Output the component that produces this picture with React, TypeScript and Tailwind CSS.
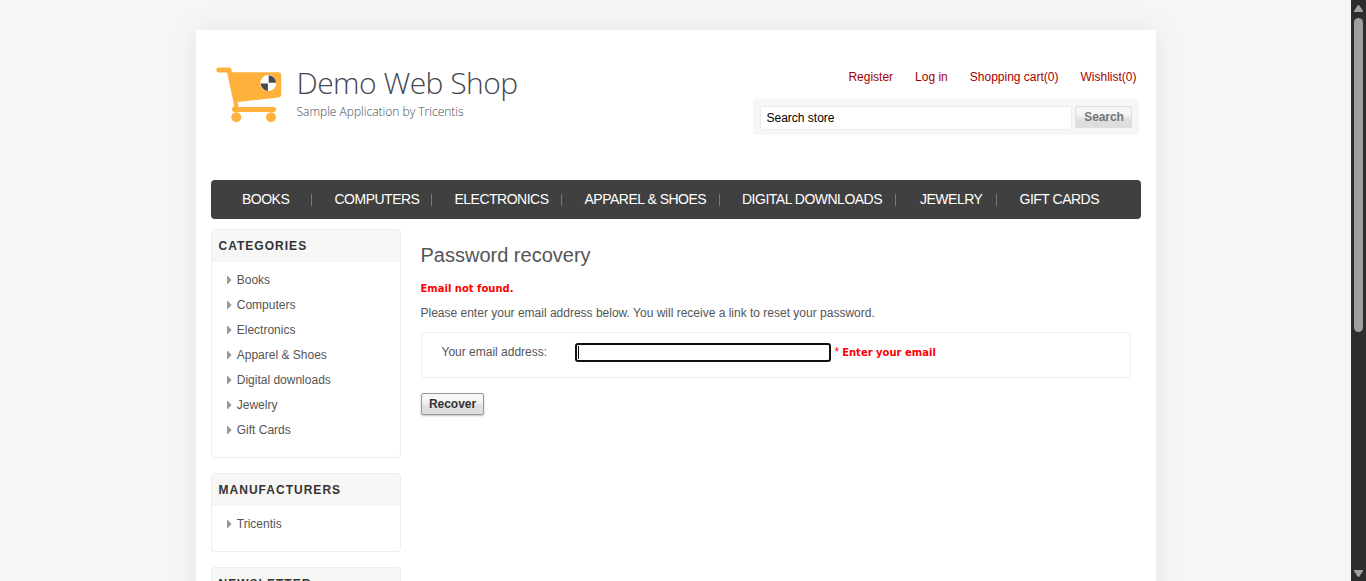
import React from "react";

const menu = [
  { label: "Books", cls: "w-[101px] pl-[31px]" },
  { label: "Computers", cls: "w-[120px] pl-[22.5px]" },
  { label: "Electronics", cls: "w-[130px] pl-[22.5px]" },
  { label: "Apparel & Shoes", cls: "w-[158px] pl-[22.5px]" },
  { label: "Digital downloads", cls: "w-[176px] pl-[22px]" },
  { label: "Jewelry", cls: "w-[101px] pl-[24px]" },
  { label: "Gift Cards", cls: "w-[140px] pl-[22.5px]" },
];

const categories = ["Books", "Computers", "Electronics", "Apparel & Shoes", "Digital downloads", "Jewelry", "Gift Cards"];

function CartLogo() {
  return (
    <svg width="66" height="58" viewBox="0 0 66 58" fill="none">
      <path
        d="M2.7 2.6H13.2Q15.2 2.6 15.5 4.6L16 7.3H62.2Q65.2 7.3 65.2 10.3V29.6Q65.2 32 62.8 32.4L21.7 37V38.6Q23 40 22 42H57.6A2.5 2.5 0 0 1 57.6 47H18.4Q15.8 46.8 16 44.4Q16.2 42 18.2 40.8L11 7.4H2.7A2.4 2.4 0 0 1 2.7 2.6Z"
        fill="#ffb23b"
      />
      <circle cx="20.3" cy="52.2" r="5" fill="#ffb23b" />
      <circle cx="55" cy="52.2" r="5" fill="#ffb23b" />
      <circle cx="52.3" cy="18.1" r="8" fill="#fff" />
      <path d="M52.7 17.7V10.3A7.7 7.7 0 0 1 60 17.7ZM51.9 18.5V25.9A7.7 7.7 0 0 1 44.6 18.5Z" fill="#454852" />
    </svg>
  );
}

function Block({ title, items, className }: { title: string; items: string[]; className: string }) {
  return (
    <section className={`overflow-hidden rounded-[4px] border border-[#ededed] ${className}`}>
      <h2 className="h-8 bg-[#f6f6f5] pt-px pl-[6.5px] text-[12px] leading-[31px] font-bold tracking-[1.02px] text-[#333] uppercase">{title}</h2>
      <ul className="pt-[5px]">
        {items.map((item) => (
          <li key={item} className="flex h-[25px] items-center pl-[15px] text-[12px] leading-[25px] text-[#555]">
            <svg width="5" height="8" viewBox="0 0 5 8" className="mr-[4.75px] shrink-0">
              <path d="M0 0H.8L4.6 4L.8 8H0Z" fill="#999" />
            </svg>
            <span className="pt-[2px]">{item}</span>
          </li>
        ))}
      </ul>
    </section>
  );
}

function Scrollbar() {
  return (
    <div className="flex h-full w-[15px] shrink-0 flex-col items-center bg-[#2c2c2c]">
      <svg width="9" height="7" viewBox="0 0 9 7" className="mt-[5px] shrink-0">
        <path d="M4.5 0Q5.2 0 5.6 .8L9 6V7H0V6L3.4 .8Q3.8 0 4.5 0Z" fill="#9f9f9f" />
      </svg>
      <div className="mt-[6px] h-[314px] w-[9px] shrink-0 rounded-full bg-[#9f9f9f]" />
      <svg width="9" height="7" viewBox="0 0 9 7" className="mt-auto mb-[4px] shrink-0">
        <path d="M4.5 7Q5.2 7 5.6 6.2L9 1V0H0V1L3.4 6.2Q3.8 7 4.5 7Z" fill="#9f9f9f" />
      </svg>
    </div>
  );
}

export default function App() {
  return (
    <div className="flex h-[581px] w-[1366px] overflow-hidden bg-[#f6f6f4] font-['Liberation_Sans',Arial,sans-serif] text-[12px]">
      <div className="h-full flex-1 overflow-hidden pt-[30px] pl-[196px]">
        <div className="h-[800px] w-[960px] bg-white px-[15px] shadow-[0_0_28px_rgba(0,0,0,0.08)]">
          <header className="flex h-[150px] justify-between">
            <a className="flex pt-[35px] pl-[5px]">
              <CartLogo />
              <div className="pl-[14.5px] font-['Open_Sans',sans-serif] font-light whitespace-nowrap">
                <div className="h-[38px] text-[30px] leading-[36px] tracking-[-0.53px] text-[#444752]">Demo Web Shop</div>
                <div className="text-[12px] leading-[18px] text-[#454852]">Sample Application by Tricentis</div>
              </div>
            </a>
            <div className="mr-[2px] flex w-[386px] flex-col pt-[39px]">
              <nav className="flex justify-end gap-[22px] pr-[2.5px] text-[12px] leading-4 whitespace-nowrap text-[#a50000]">
                <a>Register</a>
                <a>Log in</a>
                <a>Shopping cart(0)</a>
                <a>Wishlist(0)</a>
              </nav>
              <form className="mt-[14px] flex h-9 rounded-[3px] bg-[#f6f6f5] pt-[7px] pl-[7px]">
                <div className="h-6 w-[312px] border border-[#ebebeb] bg-white pl-[5.5px] text-[12px] leading-[22px] text-black">Search store</div>
                <button type="button" className="ml-[3px] h-[22px] w-[57px] rounded-[2px] border border-[#dedede] bg-linear-to-b from-[#f6f6f6] from-35% to-[#dedede] to-65% pl-px text-[12px] leading-[20px] font-bold tracking-[-0.1px] text-[#777]">Search</button>
              </form>
            </div>
          </header>

          <nav className="flex h-[39px] items-center rounded-[4px] bg-[#404040]">
            {menu.map((m, i) => (
              <div key={m.label} className={`flex items-center justify-between text-[14px] leading-[39px] tracking-[-0.5px] whitespace-nowrap text-white uppercase ${m.cls}`}>
                <span>{m.label}</span>
                {i < menu.length - 1 && <span className="h-3 w-px bg-[#777]" />}
              </div>
            ))}
          </nav>

          <div className="flex pt-[10px]">
            <aside className="flex w-[190px] flex-col gap-[15px]">
              <Block title="Categories" items={categories} className="h-[229px]" />
              <Block title="Manufacturers" items={["Tricentis"]} className="h-[79px]" />
              <Block title="Newsletter" items={[]} className="h-[140px]" />
            </aside>
            <main className="ml-5 w-[710px] text-[#555]">
              <h1 className="mt-[10px] -ml-[0.5px] text-[20px] leading-8 text-[#555]">Password recovery</h1>
              <p className="mt-[10px] -ml-[0.5px] font-['DejaVu_Sans',Verdana,sans-serif] text-[10px] leading-4 font-bold text-[#f00]">Email not found.</p>
              <p className="mt-[8px] -ml-[0.5px] text-[12px] leading-4">Please enter your email address below. You will receive a link to reset your password.</p>
              <div className="mt-[11px] flex h-[46px] rounded-[4px] border border-[#ededed] pt-[10px] pl-[19.5px]">
                <label className="w-[133.5px] pt-px text-[12px] leading-4">Your email address:</label>
                <div className="flex h-[19px] w-[256px] items-center rounded-[3px] border-2 border-[#101010] bg-white pl-px">
                  <span className="h-[13px] w-px bg-black" />
                </div>
                <span className="ml-[3.5px] pt-px text-[12px] leading-4 text-[#f00]">*</span>
                <span className="ml-[3px] pt-px font-['DejaVu_Sans',Verdana,sans-serif] text-[10px] leading-[17px] font-bold whitespace-nowrap text-[#f00]">Enter your email</span>
              </div>
              <button type="button" className="mt-[15px] block h-[22px] w-[63px] rounded-[2px] border border-[#999] bg-linear-to-b from-[#f6f6f6] from-35% to-[#dedede] to-65% text-[12px] leading-[20px] font-bold tracking-[-0.05px] text-[#333] shadow-[0_1px_2px_rgba(0,0,0,0.25)]">Recover</button>
            </main>
          </div>
        </div>
      </div>
      <Scrollbar />
    </div>
  );
}
